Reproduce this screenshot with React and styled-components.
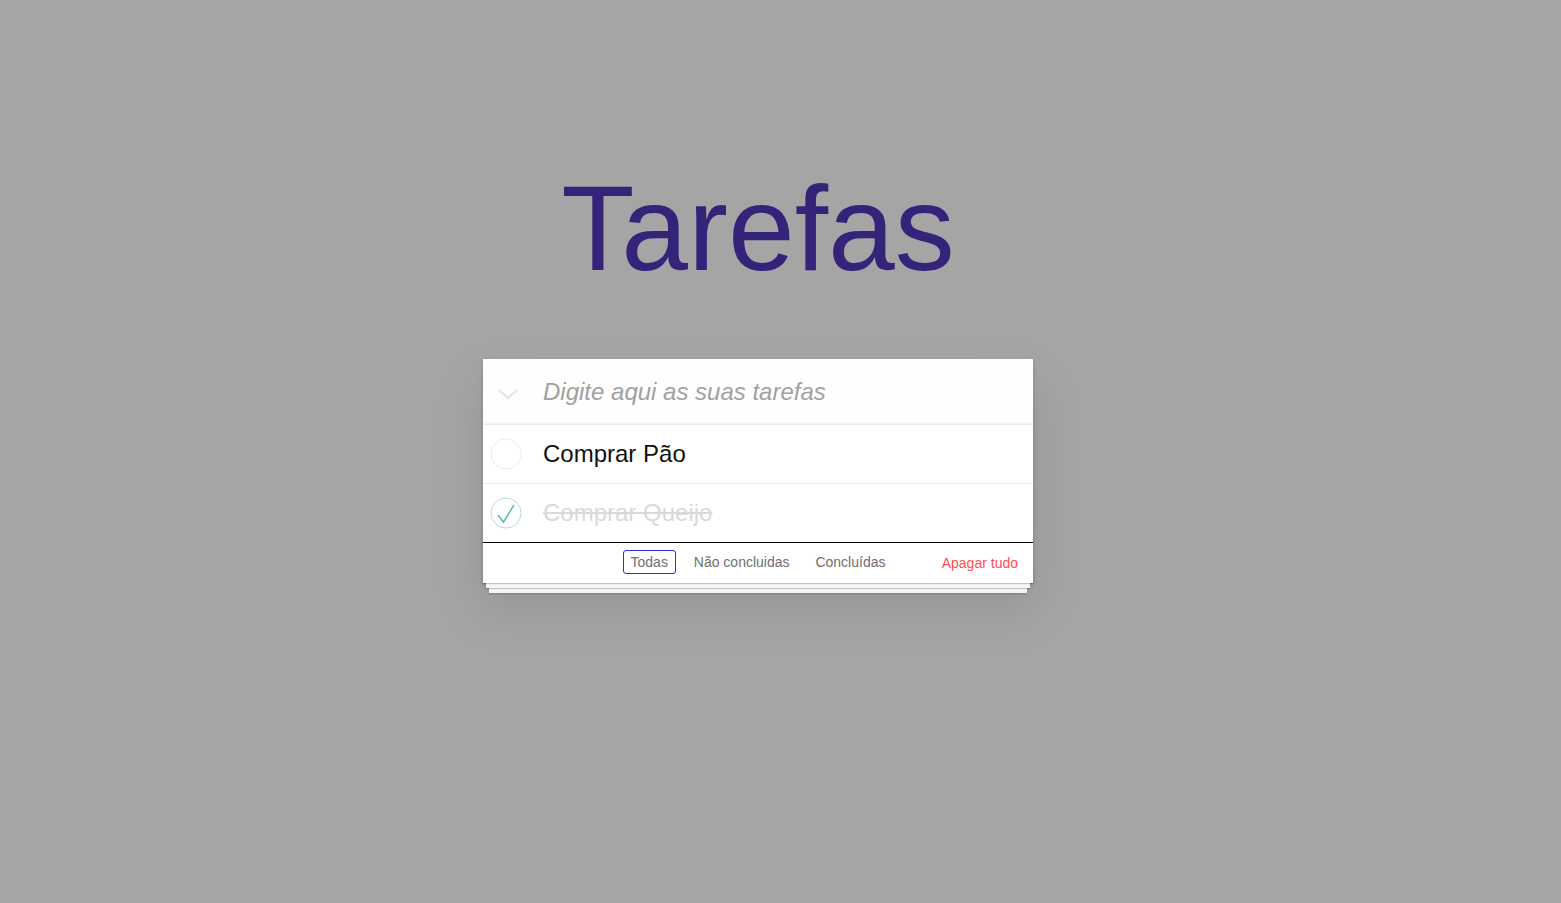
import React from 'react';
import styled, { createGlobalStyle } from 'styled-components';

const GlobalStyle = createGlobalStyle`
  html, body {
    margin: 0;
    padding: 0;
    background: #a5a5a5;
    font-family: 'Liberation Sans', Arial, sans-serif;
  }
`;

const Page = styled.div`
  min-height: 903px;
  display: flex;
  flex-direction: column;
  align-items: center;
  padding: 168px 45px 0 0;
  box-sizing: border-box;
`;

const Title = styled.h1`
  margin: 0 0 71px;
  font-size: 120px;
  line-height: 120px;
  font-weight: 400;
  color: #35237a;
`;

const Card = styled.section`
  width: 550px;
  background: #fff;
  position: relative;
  isolation: isolate;
  box-shadow: 0 2px 4px rgba(0, 0, 0, 0.2), 0 25px 50px rgba(0, 0, 0, 0.1);
`;

const Header = styled.div`
  height: 65px;
  display: flex;
  align-items: center;
  background: rgba(0, 0, 0, 0.003);
  box-shadow: inset 0 -2px 1px rgba(0, 0, 0, 0.03);
  border-bottom: 1px solid #ededed;
`;

const ToggleAll = styled.div`
  width: 60px;
  display: flex;
  justify-content: center;
  padding-right: 10px;
  padding-top: 4px;
  box-sizing: border-box;
`;

const NewTodo = styled.input`
  flex: 1;
  border: none;
  background: transparent;
  font-family: inherit;
  font-size: 24px;
  font-style: italic;
  color: #4d4d4d;
  padding: 0;
  outline: none;

  &::placeholder {
    color: #a0a0a0;
    font-style: italic;
  }
`;

const List = styled.ul`
  list-style: none;
  margin: 0;
  padding: 0;
`;

const Item = styled.li`
  height: 58px;
  display: flex;
  align-items: center;
  border-bottom: ${(p) => (p.$last ? 'none' : '1px solid #ededed')};
`;

const Check = styled.div`
  width: 60px;
  display: flex;
  padding-left: 7px;
  box-sizing: border-box;
`;

const Label = styled.span`
  font-size: 24px;
  line-height: 1.2;
  color: ${(p) => (p.$done ? '#d9d9d9' : '#111')};
  text-decoration: ${(p) => (p.$done ? 'line-through' : 'none')};
`;

const Footer = styled.footer`
  position: relative;
  height: 40px;
  border-top: 1px solid #000;
  display: flex;
  align-items: center;
  justify-content: flex-end;
  padding: 0 15px;
  font-size: 14px;
  color: #777;

  &::before {
    content: '';
    position: absolute;
    left: 0;
    right: 0;
    bottom: 0;
    height: 50px;
    z-index: -1;
    box-shadow: 0 1px 1px rgba(0, 0, 0, 0.2), 0 8px 0 -3px #f6f6f6,
      0 9px 1px -3px rgba(0, 0, 0, 0.2), 0 16px 0 -6px #f6f6f6,
      0 17px 2px -6px rgba(0, 0, 0, 0.2);
  }
`;

const Filters = styled.ul`
  position: absolute;
  left: 0;
  right: 0;
  top: 7px;
  margin: 0;
  padding: 0;
  list-style: none;
  text-align: center;
`;

const Filter = styled.li`
  display: inline;
`;

const FilterLink = styled.a`
  display: inline-block;
  margin: 0 3px;
  padding: 3px 7px;
  border: 1px solid ${(p) => (p.$active ? '#2a2af0' : 'transparent')};
  border-radius: 3px;
  color: #6f6f6f;
  line-height: 16px;
  text-decoration: none;
`;

const ClearButton = styled.button`
  border: none;
  background: none;
  padding: 0;
  font-family: inherit;
  font-size: 14px;
  color: #ff4d4d;
  cursor: pointer;
`;

const Chevron = () => (
  <svg width="22" height="12" viewBox="0 0 22 12">
    <path d="M2 2 L11 10 L20 2" fill="none" stroke="#e8e8e8" strokeWidth="2.5" />
  </svg>
);

const Circle = ({ done }) => (
  <svg width="32" height="32" viewBox="0 0 32 32">
    <circle cx="16" cy="16" r="15" fill="none" stroke={done ? '#bddad5' : '#ededed'} strokeWidth="1" />
    {done && <path d="M8 18 L13.5 25 L24 8" fill="none" stroke="#5dc2af" strokeWidth="1.6" />}
  </svg>
);

const todos = [
  { text: 'Comprar Pão', done: false },
  { text: 'Comprar Queijo', done: true },
];

const App = () => {
  return (
    <Page>
      <GlobalStyle />
      <Title>Tarefas</Title>
      <Card>
        <Header>
          <ToggleAll>
            <Chevron />
          </ToggleAll>
          <NewTodo placeholder="Digite aqui as suas tarefas" />
        </Header>
        <List>
          {todos.map((t, i) => (
            <Item key={t.text} $last={i === todos.length - 1}>
              <Check>
                <Circle done={t.done} />
              </Check>
              <Label $done={t.done}>{t.text}</Label>
            </Item>
          ))}
        </List>
        <Footer>
          <Filters>
            <Filter>
              <FilterLink $active>Todas</FilterLink>
            </Filter>{' '}
            <Filter>
              <FilterLink>Não concluidas</FilterLink>
            </Filter>{' '}
            <Filter>
              <FilterLink>Concluídas</FilterLink>
            </Filter>
          </Filters>
          <ClearButton>Apagar tudo</ClearButton>
        </Footer>
      </Card>
    </Page>
  );
};

export default App;
